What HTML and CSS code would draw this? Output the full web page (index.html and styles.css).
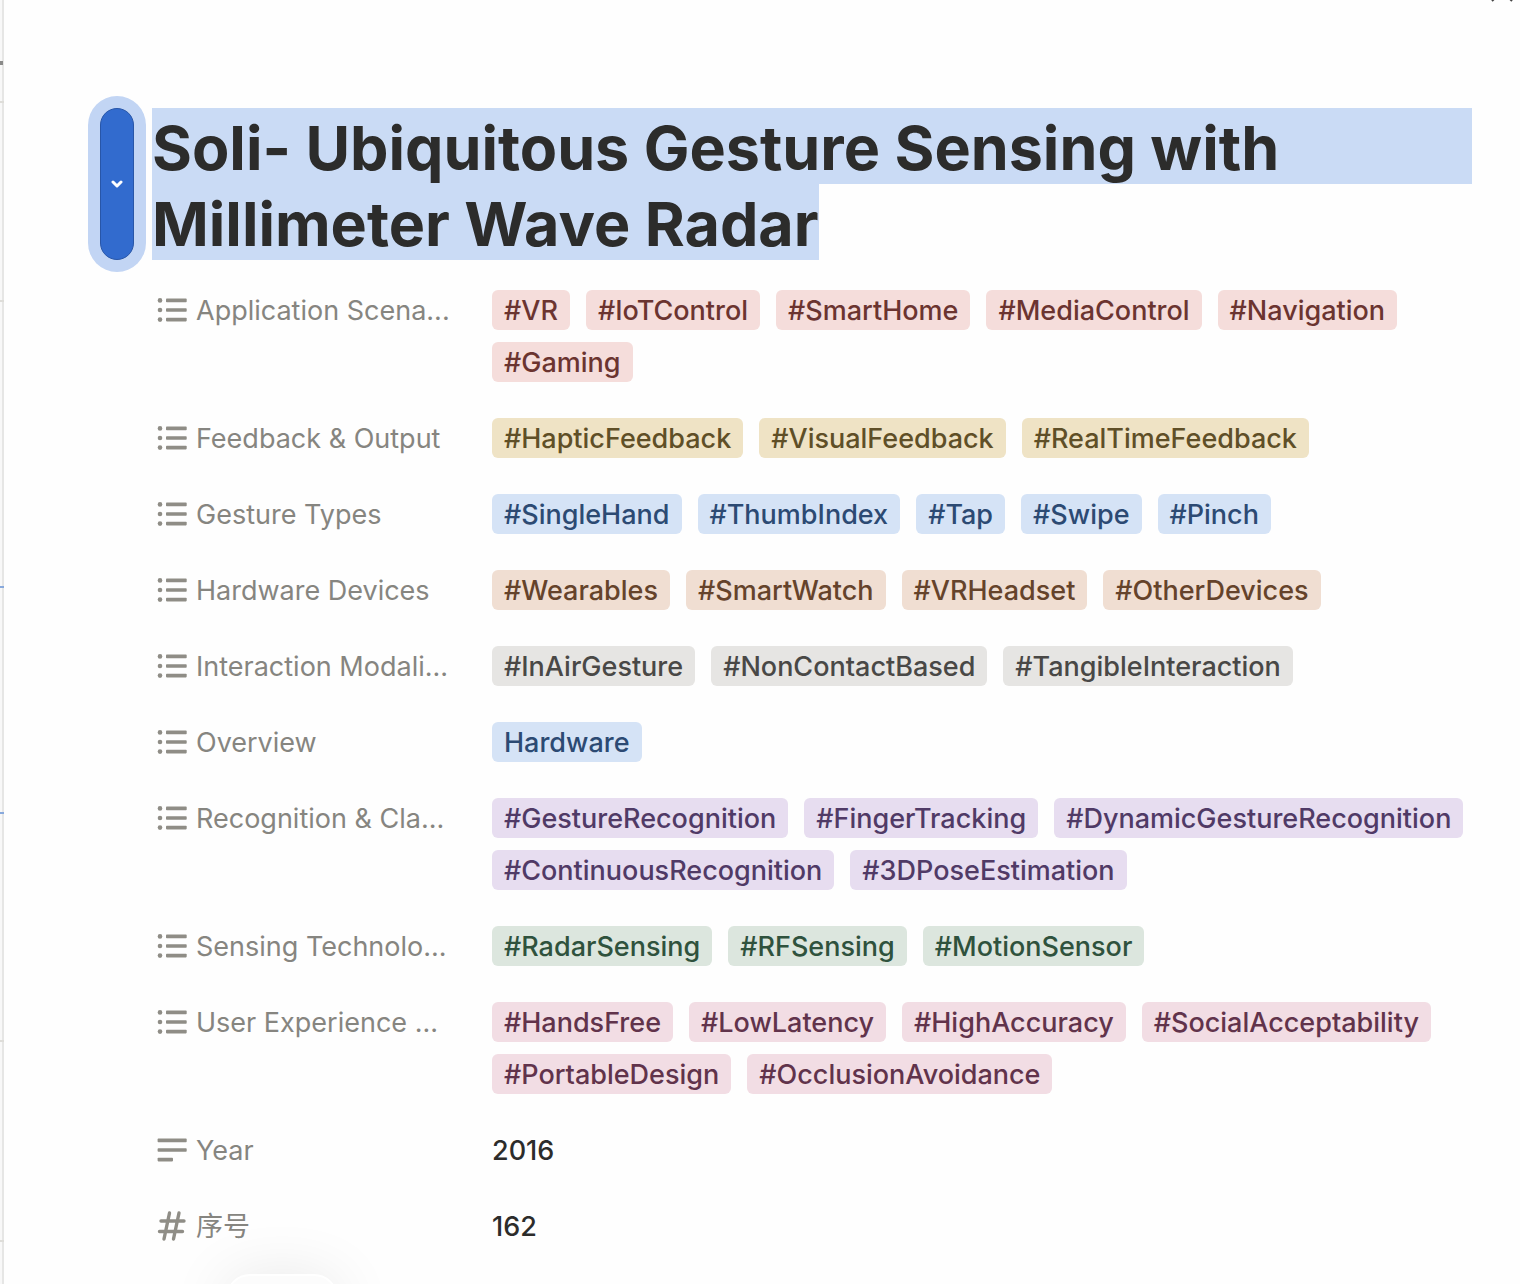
FILE: index.html
```html
<!DOCTYPE html>
<html lang="en">
<head>
<meta charset="utf-8">
<title>Soli- Ubiquitous Gesture Sensing with Millimeter Wave Radar</title>
<link rel="stylesheet" href="styles.css">
</head>
<body>
<svg class="sprite" aria-hidden="true">
  <symbol id="list" viewBox="0 0 32 32"><circle cx="4" cy="6.4" r="2.3"/><circle cx="4" cy="16" r="2.3"/><circle cx="4" cy="25.6" r="2.3"/><rect x="10" y="4.6" width="20.7" height="3.6" rx=".8"/><rect x="10" y="14.2" width="20.7" height="3.6" rx=".8"/><rect x="10" y="23.8" width="20.7" height="3.6" rx=".8"/></symbol>
  <symbol id="text" viewBox="0 0 32 32"><rect x="1.6" y="4.6" width="29.1" height="3.6" rx=".8"/><rect x="1.6" y="14.2" width="29.1" height="3.6" rx=".8"/><rect x="1.6" y="23.8" width="15.4" height="3.6" rx=".8"/></symbol>
  <symbol id="number" viewBox="0 0 32 32"><path d="M13.5 3 8 29M23 3 17.5 29M5 11H28M3.5 21.5H26.5" fill="none" stroke="currentColor" stroke-width="3.4" stroke-linecap="round"/></symbol>
</svg>
<aside class="board" aria-hidden="true">
  <i class="dash"></i><i class="rule r1"></i><i class="rule r2"></i><i class="range"></i><i class="rule r3"></i><i class="rule r4"></i>
</aside>
<main class="page">
  <button class="close" type="button" aria-label="Close"><svg viewBox="0 0 24 24"><path d="M2 23 12 13 22 23"/></svg></button>
  <header class="heading">
    <button class="toggle" type="button" aria-label="Title options"><svg viewBox="0 0 12 8"><path d="M2 2 6 6 10 2"/></svg></button>
    <h1 class="title"><span class="full">Soli- Ubiquitous Gesture Sensing with</span> <span class="part">Millimeter Wave Radar</span></h1>
  </header>
  <dl class="properties">
    <dt><svg><use href="#list"/></svg><span>Application Scena...</span></dt>
    <dd class="red"><span>#VR</span><span>#IoTControl</span><span>#SmartHome</span><span>#MediaControl</span><span>#Navigation</span><span>#Gaming</span></dd>
    <dt><svg><use href="#list"/></svg><span>Feedback &amp; Output</span></dt>
    <dd class="yellow"><span>#HapticFeedback</span><span>#VisualFeedback</span><span>#RealTimeFeedback</span></dd>
    <dt><svg><use href="#list"/></svg><span>Gesture Types</span></dt>
    <dd class="blue"><span>#SingleHand</span><span>#ThumbIndex</span><span>#Tap</span><span>#Swipe</span><span>#Pinch</span></dd>
    <dt><svg><use href="#list"/></svg><span>Hardware Devices</span></dt>
    <dd class="orange"><span>#Wearables</span><span>#SmartWatch</span><span>#VRHeadset</span><span>#OtherDevices</span></dd>
    <dt><svg><use href="#list"/></svg><span>Interaction Modali...</span></dt>
    <dd class="gray"><span>#InAirGesture</span><span>#NonContactBased</span><span>#TangibleInteraction</span></dd>
    <dt><svg><use href="#list"/></svg><span>Overview</span></dt>
    <dd class="blue"><span>Hardware</span></dd>
    <dt><svg><use href="#list"/></svg><span>Recognition &amp; Cla...</span></dt>
    <dd class="purple"><span>#GestureRecognition</span><span>#FingerTracking</span><span>#DynamicGestureRecognition</span><span>#ContinuousRecognition</span><span>#3DPoseEstimation</span></dd>
    <dt><svg><use href="#list"/></svg><span>Sensing Technolo...</span></dt>
    <dd class="green"><span>#RadarSensing</span><span>#RFSensing</span><span>#MotionSensor</span></dd>
    <dt><svg><use href="#list"/></svg><span>User Experience ...</span></dt>
    <dd class="pink"><span>#HandsFree</span><span>#LowLatency</span><span>#HighAccuracy</span><span>#SocialAcceptability</span><span>#PortableDesign</span><span>#OcclusionAvoidance</span></dd>
    <dt><svg><use href="#text"/></svg><span>Year</span></dt>
    <dd class="plain">2016</dd>
    <dt><svg><use href="#number"/></svg><span lang="zh">序号</span></dt>
    <dd class="plain">162</dd>
  </dl>
</main>
<div class="popover"></div>
</body>
</html>
```
FILE: styles.css
```css
* { box-sizing: border-box; }
body {
  margin: 0;
  display: flex;
  min-height: 100vh;
  overflow: hidden;
  position: relative;
  background: #fefefe;
  color: #2c2c2b;
  font: 27px/38px Inter, "Noto Sans CJK SC", sans-serif;
}
.sprite { position: absolute; width: 0; height: 0; }

/* sliver of the board behind the page */
.board {
  position: relative;
  flex: none;
  width: 4px;
  background: #f8f8f8;
  border-right: 2px solid #e6e6e5;
}
.board i { position: absolute; left: 0; width: 4px; }
.rule { height: 2px; background: #deddd9; }
.r1 { top: 101px; }
.r2 { top: 300px; }
.r3 { top: 1040px; }
.r4 { top: 1240px; }
.board .dash { top: 61px; width: 3px; height: 4px; background: #8a8a89; }
.range {
  top: 586px;
  height: 228px;
  border: solid #88a9dc;
  border-width: 2px 0;
}

.page { position: relative; flex: 1; min-width: 0; padding: 108px 48px 36px 96px; }
.close {
  position: absolute;
  top: -22px;
  right: 6px;
  width: 24px;
  height: 24px;
  padding: 0;
  border: 0;
  background: none;
}
.close svg { display: block; fill: none; stroke: #444; stroke-width: 2; }

.heading { display: flex; gap: 18px; margin-bottom: 30px; }
.toggle {
  display: flex;
  align-items: center;
  justify-content: center;
  flex: none;
  width: 34px;
  padding: 0;
  border: 1px solid #2856a8;
  border-radius: 17px;
  background: #326bce;
  box-shadow: 0 0 0 12px #c2d5f4;
}
.toggle svg { width: 12px; height: 8px; fill: none; stroke: #fff; stroke-width: 3; stroke-linecap: round; stroke-linejoin: round; }
.title { flex: 1; margin: 0; font-size: 61px; line-height: 72px; font-weight: 700; white-space: nowrap; }
.title span { padding-top: 4px; background: #cadbf5; }
.full { display: block; }
.part { display: inline-block; vertical-align: top; }

.properties {
  display: grid;
  grid-template-columns: 300px 1fr;
  gap: 36px;
  margin: 0 0 0 56px;
}
dt { display: flex; align-items: flex-start; gap: 8px; height: 40px; color: #868580; white-space: nowrap; }
dt span, .plain { padding-top: 2px; }
dt svg { flex: none; width: 32px; height: 32px; margin-top: 4px; color: #8f8d86; fill: currentColor; }
dd { display: flex; flex-wrap: wrap; gap: 12px 16px; margin: 0; font-weight: 450; }
dd span { padding: 2px 12px 0; border-radius: 6px; }
.red span { background: #f5dddb; color: #6b3430; }
.yellow span { background: #efe3c5; color: #5f4f27; }
.blue span { background: #d5e3f6; color: #2c4a73; }
.orange span { background: #f0ded2; color: #65432b; }
.gray span { background: #e6e5e3; color: #494846; }
.purple span { background: #e7ddf0; color: #503a66; }
.green span { background: #dce6de; color: #2f523d; }
.pink span { background: #f2dde4; color: #61334b; }

.popover {
  position: absolute;
  top: 1274px;
  left: 226px;
  width: 112px;
  height: 48px;
  border: 2px solid #fff;
  border-radius: 24px;
  background: #fcfcfc;
  box-shadow: 0 8px 64px rgb(0 0 0 / 12%);
}
```
